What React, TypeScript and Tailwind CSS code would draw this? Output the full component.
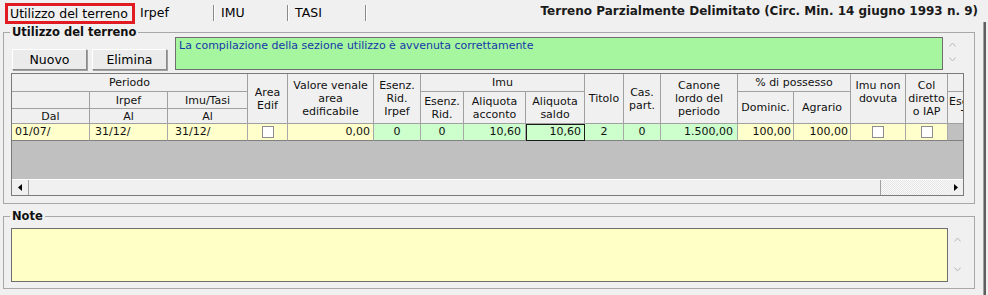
import React from "react";

// header cell base (grey, centred, thin grid lines)
const hd =
  "bg-[#f0f0f0] border-r border-b border-[#a0a0a0] flex flex-col items-center justify-center text-center leading-[13px] whitespace-nowrap";
// data row cell base
const dc = "border-r border-b border-r-[#a8a8a8] border-b-[#808080] flex items-center whitespace-nowrap";
const yel = "bg-[#ffffcc]";
const grn = "bg-[#ccffcc]";

function Chevron({ up }: { up?: boolean }) {
  return (
    <svg width="7" height="5" viewBox="0 0 7 5" className="block">
      <polyline
        points={up ? "0.5,4.5 3.5,1 6.5,4.5" : "0.5,0.5 3.5,4 6.5,0.5"}
        fill="none"
        stroke="#b8b8b8"
        strokeWidth="1"
      />
    </svg>
  );
}

function Check() {
  return <div className="w-[12px] h-[12px] bg-white border border-[#8e8e8e]" />;
}

function Arrow({ left }: { left?: boolean }) {
  return (
    <svg width="4" height="7" viewBox="0 0 4 7" className="block">
      <polygon points={left ? "4,0 0,3.5 4,7" : "0,0 4,3.5 0,7"} fill="#000" />
    </svg>
  );
}

function Btn({ label, className }: { label: string; className?: string }) {
  return (
    <button
      className={
        "w-[75px] h-[21px] bg-[#ebebeb] border border-t-white border-l-white border-r-[#8a8a8a] border-b-[#8a8a8a] shadow-[1px_1px_0_#a0a0a0] text-[12.5px] leading-[18px] text-black " +
        (className ?? "")
      }
    >
      {label}
    </button>
  );
}

function UsageTable() {
  return (
    <div className="ml-[7px] mt-[3px] w-[953px] h-[123px] border border-[#7a7a7a] overflow-hidden flex flex-col">
      <div className="grid w-max grid-cols-[78px_78px_80px_40px_86px_47px_43px_62px_59px_39px_37px_77px_56px_57px_55px_42px_50px] grid-rows-[18px_17px_15px_17px] text-[11px] text-[#111]">
        {/* row 1 */}
        <div className={hd + " col-start-1 col-span-3 row-start-1"}>Periodo</div>
        <div className={hd + " col-start-4 row-start-1 row-span-3"}>
          <span>Area</span>
          <span>Edif</span>
        </div>
        <div className={hd + " col-start-5 row-start-1 row-span-3"}>
          <span>Valore venale</span>
          <span>area</span>
          <span>edificabile</span>
        </div>
        <div className={hd + " col-start-6 row-start-1 row-span-3"}>
          <span>Esenz.</span>
          <span>Rid.</span>
          <span>Irpef</span>
        </div>
        <div className={hd + " col-start-7 col-span-3 row-start-1"}>Imu</div>
        <div className={hd + " col-start-10 row-start-1 row-span-3"}>Titolo</div>
        <div className={hd + " col-start-11 row-start-1 row-span-3"}>
          <span>Cas.</span>
          <span>part.</span>
        </div>
        <div className={hd + " col-start-12 row-start-1 row-span-3"}>
          <span>Canone</span>
          <span>lordo del</span>
          <span>periodo</span>
        </div>
        <div className={hd + " col-start-13 col-span-2 row-start-1"}>% di possesso</div>
        <div className={hd + " col-start-15 row-start-1 row-span-3 pb-[13px]"}>
          <span>Imu non</span>
          <span>dovuta</span>
        </div>
        <div className={hd + " col-start-16 row-start-1 row-span-3"}>
          <span>Col</span>
          <span>diretto</span>
          <span>o IAP</span>
        </div>
        <div className={hd + " col-start-17 row-start-1"} />

        {/* row 2 */}
        <div className={hd + " col-start-1 row-start-2"} />
        <div className={hd + " col-start-2 row-start-2"}>Irpef</div>
        <div className={hd + " col-start-3 row-start-2"}>Imu/Tasi</div>
        <div className={hd + " col-start-7 row-start-2 row-span-2"}>
          <span>Esenz.</span>
          <span>Rid.</span>
        </div>
        <div className={hd + " col-start-8 row-start-2 row-span-2"}>
          <span>Aliquota</span>
          <span>acconto</span>
        </div>
        <div className={hd + " col-start-9 row-start-2 row-span-2"}>
          <span>Aliquota</span>
          <span>saldo</span>
        </div>
        <div className={hd + " col-start-13 row-start-2 row-span-2"}>Dominic.</div>
        <div className={hd + " col-start-14 row-start-2 row-span-2"}>Agrario</div>
        <div className={hd + " col-start-17 row-start-2 row-span-2 !items-start pl-[1px]"}>
          <span>Esenz.</span>
          <span className="pl-[12px]">TASI</span>
        </div>

        {/* row 3 */}
        <div className={hd + " col-start-1 row-start-3"}>Dal</div>
        <div className={hd + " col-start-2 row-start-3"}>Al</div>
        <div className={hd + " col-start-3 row-start-3"}>Al</div>

        {/* data row */}
        <div className={dc + " " + yel + " col-start-1 row-start-4 pl-[3px]"}>01/07/</div>
        <div className={dc + " " + yel + " col-start-2 row-start-4 pl-[5px]"}>31/12/</div>
        <div className={dc + " " + yel + " col-start-3 row-start-4 pl-[7px]"}>31/12/</div>
        <div className={dc + " " + yel + " col-start-4 row-start-4 justify-center"}>
          <Check />
        </div>
        <div className={dc + " " + yel + " col-start-5 row-start-4 justify-end pr-[3px]"}>0,00</div>
        <div className={dc + " " + grn + " col-start-6 row-start-4 justify-center"}>0</div>
        <div className={dc + " " + grn + " col-start-7 row-start-4 justify-center"}>0</div>
        <div className={dc + " " + grn + " col-start-8 row-start-4 justify-end pr-[4px]"}>10,60</div>
        <div
          className={
            dc + " " + grn + " col-start-9 row-start-4 justify-end pr-[3px] outline outline-1 -outline-offset-1 outline-[#1a1a1a]"
          }
        >
          10,60
        </div>
        <div className={dc + " " + grn + " col-start-10 row-start-4 justify-center"}>2</div>
        <div className={dc + " " + grn + " col-start-11 row-start-4 justify-center"}>0</div>
        <div className={dc + " " + grn + " col-start-12 row-start-4 justify-end pr-[4px]"}>1.500,00</div>
        <div className={dc + " " + yel + " col-start-13 row-start-4 justify-end pr-[2px]"}>100,00</div>
        <div className={dc + " " + yel + " col-start-14 row-start-4 justify-end pr-[2px]"}>100,00</div>
        <div className={dc + " " + yel + " col-start-15 row-start-4 justify-center"}>
          <Check />
        </div>
        <div className={dc + " " + yel + " col-start-16 row-start-4 justify-center"}>
          <Check />
        </div>
        <div className="col-start-17 row-start-4 bg-[#c0c0c0] border-b border-[#808080]" />
      </div>

      {/* empty grey area */}
      <div className="h-[38px] bg-[#c0c0c0]" />

      {/* horizontal scrollbar */}
      <div className="h-[16px] flex bg-[#f0f0f0] border-t border-white">
        <div className="w-[17px] border-r border-[#a0a0a0] flex items-center justify-center">
          <Arrow left />
        </div>
        <div className="flex-1 border-r border-[#a0a0a0]" />
        <div className="w-[67px] bg-[image:repeating-conic-gradient(#e4e4e4_0_25%,#fbfbfb_0_50%)] bg-[length:2px_2px]" />
        <div className="w-[15px] flex items-center justify-center">
          <Arrow />
        </div>
      </div>
    </div>
  );
}

export default function App() {
  return (
    <div className="w-[988px] h-[295px] bg-[#f0f0f0] overflow-hidden flex flex-col font-['DejaVu_Sans','Verdana',sans-serif] text-black">
      {/* tabs + title */}
      <div className="h-[24px] flex items-start shrink-0">
        <div className="ml-[5px] mt-[3px] h-[21px] w-[130px] border-[3px] border-[#e11b22] pl-[2px] text-[12.5px] leading-[15px] whitespace-nowrap">
          Utilizzo del terreno
        </div>
        <div className="mt-[5px] h-[16px] w-[79px] pl-[5px] border-r border-[#8a8a8a] shadow-[1px_0_0_#ffffff] text-[12.5px] leading-[15px]">
          Irpef
        </div>
        <div className="mt-[5px] h-[16px] w-[74px] pl-[7px] border-r border-[#8a8a8a] shadow-[1px_0_0_#ffffff] text-[12.5px] leading-[15px]">
          IMU
        </div>
        <div className="mt-[5px] h-[16px] w-[78px] pl-[7px] border-r border-[#8a8a8a] shadow-[1px_0_0_#ffffff] text-[12.5px] leading-[15px]">
          TASI
        </div>
        <div className="ml-auto mr-[10px] mt-[3px] font-bold text-[12px] leading-[16px] text-[#1a1a1a] whitespace-nowrap">
          Terreno Parzialmente Delimitato (Circ. Min. 14 giugno 1993 n. 9)
        </div>
      </div>

      <div className="flex flex-1">
        <div className="w-[983px] pl-[3px] flex flex-col">
          {/* Utilizzo del terreno group */}
          <fieldset className="mt-[2px] w-[972px] h-[178px] border border-[#a8a8a8] min-w-0">
            <legend className="ml-[6px] px-[2px] font-bold text-[11.5px] leading-[12px] text-[#111]">
              Utilizzo del terreno
            </legend>
            <div className="-mt-[1px] pl-[8px] flex items-start">
              <Btn label="Nuovo" className="mt-[12px]" />
              <Btn label="Elimina" className="mt-[12px] ml-[5px]" />
              <div className="ml-[8px] w-[768px] h-[33px] bg-[#a6f6a0] border border-[#6e6e6e] pl-[3px] pt-[1px] text-[11px] leading-[14px] text-[#1538a8] whitespace-nowrap">
                La compilazione della sezione utilizzo è avvenuta correttamente
              </div>
              <div className="ml-[6px] pt-[5px] flex flex-col gap-[10px]">
                <Chevron up />
                <Chevron />
              </div>
            </div>
            <UsageTable />
          </fieldset>

          {/* Note group */}
          <fieldset className="mt-[6px] w-[972px] h-[79px] border border-[#a8a8a8] min-w-0">
            <legend className="ml-[6px] px-[2px] font-bold text-[11.5px] leading-[12px] text-[#111]">Note</legend>
            <div className="flex items-start">
              <div className="ml-[7px] mt-[6px] w-[937px] h-[54px] bg-[#ffffc6] border border-[#6e6e6e]" />
              <div className="ml-[6px] pt-[15px] flex flex-col gap-[25px]">
                <Chevron up />
                <Chevron />
              </div>
            </div>
          </fieldset>
        </div>
        {/* right frame edge */}
        <div className="-mt-[2px] w-[3px] border-l border-[#a0a0a0] border-r-2 border-r-[#5e5e5e]" />
      </div>
    </div>
  );
}
